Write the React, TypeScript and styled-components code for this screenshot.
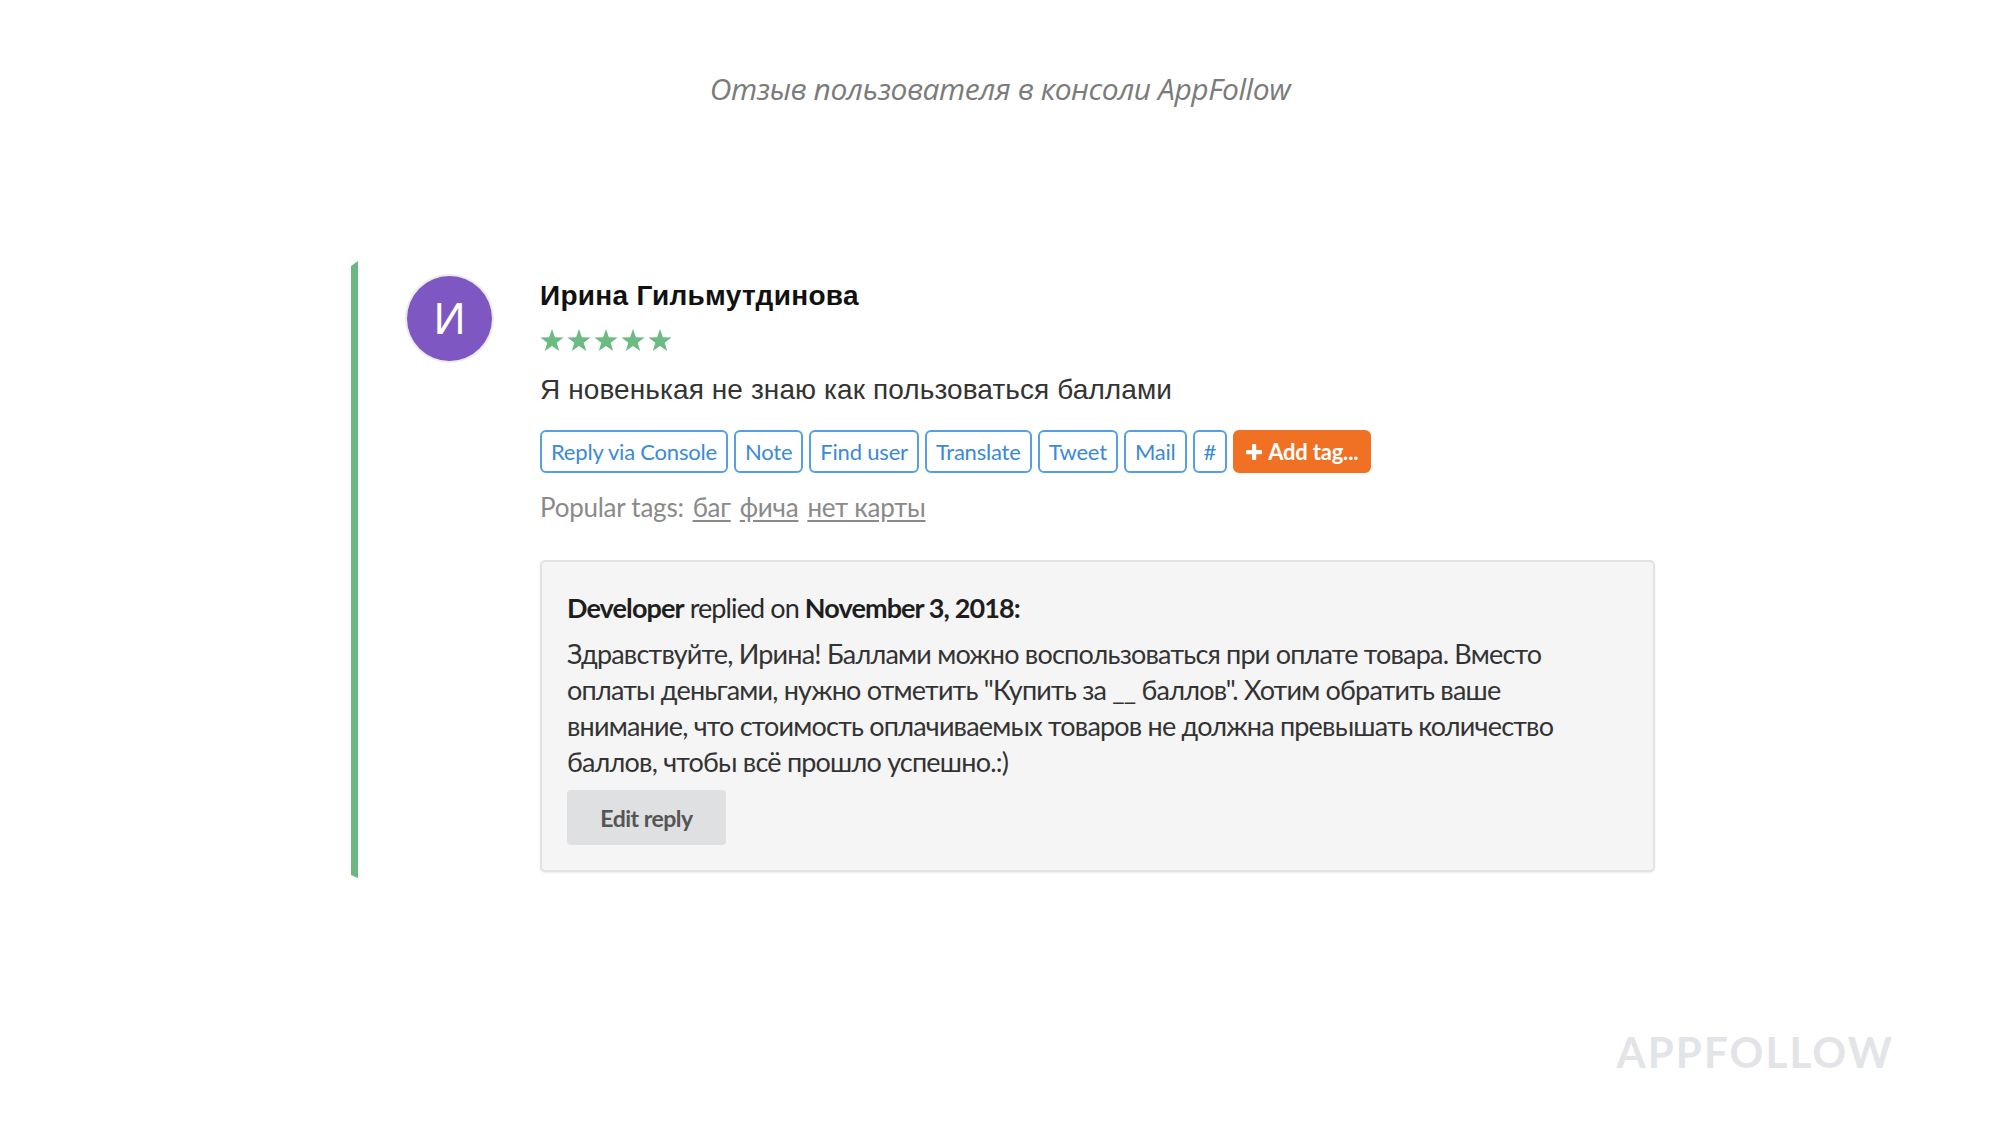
import React from "react";
import styled, { createGlobalStyle } from "styled-components";

const Global = createGlobalStyle`
  html, body { margin: 0; padding: 0; background: #ffffff; }
  body { font-family: Lato, "Open Sans", sans-serif; }
  * { box-sizing: border-box; }
`;

const Page = styled.div`
  width: 2000px;
  min-height: 1141px;
  display: flex;
  flex-direction: column;
  background: #fff;
`;

const Caption = styled.h1`
  margin: 69px 0 0;
  text-align: center;
  font-family: "Open Sans", sans-serif;
  font-style: italic;
  font-weight: 400;
  font-size: 30px;
  line-height: 40px;
  color: #7b7b7b;
  letter-spacing: -0.45px;
`;

const Card = styled.section`
  display: flex;
  align-items: stretch;
  margin: 152px 0 0 351px;
  width: 1303px;
`;

const Accent = styled.div`
  width: 7px;
  flex: none;
  background: #6ab77f;
  clip-path: polygon(0 5px, 100% 0, 100% 100%, 0 calc(100% - 3px));
`;

const AvatarCol = styled.div`
  flex: none;
  margin: 15px 0 0 49px;
`;

const Avatar = styled.div`
  width: 85px;
  height: 85px;
  border-radius: 50%;
  background: #7e57c2;
  box-shadow: 0 0 0 2px #ececec;
  display: flex;
  align-items: center;
  justify-content: center;
  color: #fff;
  font-family: "Liberation Sans", Arial, sans-serif;
  font-size: 44px;
  line-height: 1;
`;

const Body = styled.div`
  flex: 1;
  margin-left: 48px;
  padding: 18px 0 6px;
  display: flex;
  flex-direction: column;
  align-items: flex-start;
`;

const Name = styled.div`
  font-family: "Liberation Sans", Arial, sans-serif;
  font-weight: 700;
  font-size: 28px;
  line-height: 34px;
  letter-spacing: 0.3px;
  color: #111;
`;

const Stars = styled.div`
  display: flex;
  gap: 3px;
  margin-top: 16px;
  height: 22px;
`;

const ReviewText = styled.p`
  margin: 22px 0 0;
  font-family: "Liberation Sans", Arial, sans-serif;
  font-size: 28px;
  line-height: 34px;
  letter-spacing: 0.1px;
  color: #333;
`;

const Actions = styled.div`
  display: flex;
  gap: 6px;
  margin-top: 23px;
`;

const ActionButton = styled.button<{ $accent?: boolean }>`
  height: 43px;
  padding: 0 ${(p) => (p.$accent ? "11px" : "9px")};
  display: inline-flex;
  align-items: center;
  gap: 6px;
  border-radius: 6px;
  border: 2px solid ${(p) => (p.$accent ? "#f07124" : "#54a0e3")};
  background: ${(p) => (p.$accent ? "#f07124" : "#ffffff")};
  color: ${(p) => (p.$accent ? "#ffffff" : "#3a8ad6")};
  font-family: Lato, sans-serif;
  font-weight: ${(p) => (p.$accent ? 700 : 400)};
  font-size: 22px;
  letter-spacing: -0.2px;
  cursor: pointer;
`;

const TagsLine = styled.div`
  margin-top: 19px;
  font-family: Lato, sans-serif;
  font-size: 26px;
  line-height: 30px;
  color: #8a8a8a;
  display: flex;
  gap: 9px;
  letter-spacing: -0.25px;
`;

const TagLink = styled.a`
  color: #8a8a8a;
  text-decoration: underline;
  text-underline-offset: 3px;
`;

const ReplyBox = styled.div`
  margin-top: 38px;
  width: 1115px;
  background: #f5f5f5;
  border: 2px solid #e3e3e3;
  border-radius: 5px;
  padding: 28px 25px 25px;
  box-shadow: 0 1px 2px rgba(0, 0, 0, 0.08);
`;

const ReplyHead = styled.div`
  font-family: Lato, sans-serif;
  font-size: 27px;
  line-height: 36px;
  color: #2a2a2a;
  letter-spacing: -0.9px;
  b { font-weight: 700; color: #1e1e1e; }
`;

const ReplyText = styled.p`
  margin: 10px 0 0;
  font-family: Lato, sans-serif;
  font-size: 27px;
  line-height: 36px;
  color: #333;
  letter-spacing: -0.8px;
  max-width: 1000px;
`;

const EditButton = styled.button`
  margin-top: 10px;
  width: 159px;
  height: 55px;
  border: none;
  border-radius: 4px;
  background: #dfe0e2;
  color: #555;
  font-family: Lato, sans-serif;
  font-weight: 700;
  font-size: 23px;
  letter-spacing: -0.5px;
  cursor: pointer;
`;

const Footer = styled.div`
  margin-top: auto;
  display: flex;
  justify-content: flex-end;
  padding: 0 106px 68px 0;
`;

const Watermark = styled.div`
  font-family: Lato, sans-serif;
  font-weight: 700;
  font-size: 42px;
  line-height: 42px;
  letter-spacing: 2.1px;
  color: #e2e4e7;
`;

const Star = () => (
  <svg width="24" height="22" viewBox="0 0 24 22">
    <polygon
      points="12,0 14.9,8.2 23.6,8.4 16.7,13.7 19.2,22 12,17 4.8,22 7.3,13.7 0.4,8.4 9.1,8.2"
      fill="#6cbb83"
    />
  </svg>
);

const PlusIcon = () => (
  <svg width="16" height="16" viewBox="0 0 16 16">
    <rect x="6" y="0" width="4.2" height="16" rx="1" fill="#fff" />
    <rect x="0" y="6" width="16" height="4.2" rx="1" fill="#fff" />
  </svg>
);

const actions = ["Reply via Console", "Note", "Find user", "Translate", "Tweet", "Mail", "#"];

export default function App() {
  return (
    <>
      <Global />
      <Page>
        <Caption>Отзыв пользователя в консоли AppFollow</Caption>
        <Card>
          <Accent />
          <AvatarCol>
            <Avatar>И</Avatar>
          </AvatarCol>
          <Body>
            <Name>Ирина Гильмутдинова</Name>
            <Stars>
              {[0, 1, 2, 3, 4].map((i) => (
                <Star key={i} />
              ))}
            </Stars>
            <ReviewText>Я новенькая не знаю как пользоваться баллами</ReviewText>
            <Actions>
              {actions.map((a) => (
                <ActionButton key={a}>{a}</ActionButton>
              ))}
              <ActionButton $accent>
                <PlusIcon />
                Add tag...
              </ActionButton>
            </Actions>
            <TagsLine>
              <span>Popular tags:</span>
              <TagLink>баг</TagLink>
              <TagLink>фича</TagLink>
              <TagLink>нет карты</TagLink>
            </TagsLine>
            <ReplyBox>
              <ReplyHead>
                <b>Developer</b> replied on <b>November 3, 2018:</b>
              </ReplyHead>
              <ReplyText>
                Здравствуйте, Ирина! Баллами можно воспользоваться при оплате товара. Вместо
                оплаты деньгами, нужно отметить "Купить за __ баллов". Хотим обратить ваше
                внимание, что стоимость оплачиваемых товаров не должна превышать количество
                баллов, чтобы всё прошло успешно.:)
              </ReplyText>
              <EditButton>Edit reply</EditButton>
            </ReplyBox>
          </Body>
        </Card>
        <Footer>
          <Watermark>APPFOLLOW</Watermark>
        </Footer>
      </Page>
    </>
  );
}
